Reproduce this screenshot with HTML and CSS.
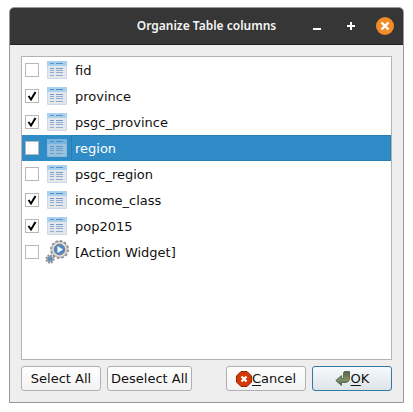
FILE: index.html
```html
<!DOCTYPE html>
<html lang="en">
<head>
<meta charset="utf-8">
<title>Organize Table columns</title>
<link rel="stylesheet" href="styles.css">
</head>
<body>
<svg class="defs" aria-hidden="true">
  <symbol id="table" viewBox="0 0 20 20">
    <rect x="0" y="1" width="20" height="18" rx="1" fill="#cfd8e6"/>
    <rect x="1" y="6" width="18" height="12" fill="#e3e7ec"/>
    <rect x="0" y="1" width="20" height="5" fill="#a9d0ec"/>
    <path d="M3 3.500h4M9 3.500h7" stroke="#5490c8"/>
    <path d="M3 8.500h4M9 8.500h7" stroke="#6f9fd0"/>
    <path d="M3 10.500h4M9 10.500h7M3 12.500h4M9 12.500h7M3 15.500h4M9 15.500h7" stroke="#8eadd2"/>
  </symbol>
</svg>
<main class="window">
  <header class="titlebar">
    <h1>Organize Table columns</h1>
    <div class="controls">
      <button type="button" aria-label="Minimize"><svg width="18" height="18" viewBox="0 0 18 18"><path d="M5 12h8" stroke="#fff" stroke-width="2"/></svg></button>
      <button type="button" aria-label="Maximize"><svg width="18" height="18" viewBox="0 0 18 18"><path d="M5 9h8M9 5v8" stroke="#fff" stroke-width="2"/></svg></button>
      <button type="button" aria-label="Close"><svg width="18" height="18" viewBox="0 0 18 18"><circle cx="9" cy="9" r="9" fill="#f28c28"/><path d="M5.500 5.500l7 7M12.500 5.500l-7 7" stroke="#fff" stroke-width="2.400"/></svg></button>
    </div>
  </header>
  <div class="content">
    <ul class="columns">
      <li><label><input type="checkbox"><svg class="icon"><use href="#table"/></svg><span>fid</span></label></li>
      <li><label><input type="checkbox" checked><svg class="icon"><use href="#table"/></svg><span>province</span></label></li>
      <li><label><input type="checkbox" checked><svg class="icon"><use href="#table"/></svg><span>psgc_province</span></label></li>
      <li class="selected"><label><input type="checkbox"><svg class="icon"><use href="#table"/></svg><span>region</span></label></li>
      <li><label><input type="checkbox"><svg class="icon"><use href="#table"/></svg><span>psgc_region</span></label></li>
      <li><label><input type="checkbox" checked><svg class="icon"><use href="#table"/></svg><span>income_class</span></label></li>
      <li><label><input type="checkbox" checked><svg class="icon"><use href="#table"/></svg><span>pop2015</span></label></li>
      <li><label><input type="checkbox"><svg class="icon gears" viewBox="0 0 24 24">
        <circle cx="14.500" cy="9.500" r="8.500" fill="#e2e2e2" stroke="#8a8a8a" stroke-width="1.800" stroke-dasharray="2.600 1.850"/>
        <circle cx="14.500" cy="9.500" r="7.800" fill="#e0e0e0" stroke="#a0a0a0" stroke-width=".8"/>
        <circle cx="14.500" cy="9.500" r="5.300" fill="#4f8bc6" stroke="#777"/>
        <path d="M12.500 6v7l5.500-3.500z" fill="#fff"/>
        <circle cx="5" cy="19" r="3.800" fill="#d5d5d5" stroke="#8a8a8a" stroke-width="1.600" stroke-dasharray="1.800 1.180"/>
        <circle cx="5" cy="19" r="2.700" fill="#5b92c8" stroke="#999" stroke-width=".8"/>
      </svg><span>[Action Widget]</span></label></li>
    </ul>
    <footer class="actions">
      <button type="button">Select All</button>
      <button type="button" class="wide">Deselect All</button>
      <button type="button" class="cancel"><svg width="16" height="16" viewBox="0 0 16 16"><path d="M5 .5h6L15.500 5v6L11 15.500H5L.5 11V5z" fill="#d33a05" stroke="#8c2400"/><path d="M5.500 5.500l5 5M10.500 5.500l-5 5" stroke="#fff" stroke-width="2.200"/></svg><span><u>C</u>ancel</span></button>
      <button type="button" class="ok"><svg width="16" height="16" viewBox="0 0 16 16"><defs><linearGradient id="leaf" x1="0" y1="0" x2="0" y2="1"><stop offset="0" stop-color="#56634a"/><stop offset=".6" stop-color="#81936b"/><stop offset="1" stop-color="#4c5a3e"/></linearGradient></defs><path d="M8.500 1.500Q9 .5 10 .5h4.500v7.500Q14 11 11 11.500H6.500v3L.8 9.500 6.500 4.500v3h2z" fill="url(#leaf)" stroke="#4b5840" stroke-width=".8"/></svg><span><u>O</u>K</span></button>
    </footer>
  </div>
</main>
</body>
</html>
```
FILE: styles.css
```css
* {
  box-sizing: border-box;
}

body {
  margin: 0;
  padding: 7px 9px 9px;
  min-height: 100vh;
  display: flex;
  background: #fff;
  color: #111;
  font: 13px/16px "DejaVu Sans", sans-serif;
}

button {
  font: inherit;
  color: inherit;
}

.defs {
  position: absolute;
  width: 0;
  height: 0;
}

.window {
  flex: 1;
  display: flex;
  flex-direction: column;
  border: 1px solid #999;
  border-radius: 5px 5px 0 0;
  background: #eee;
  overflow: hidden;
}

.titlebar {
  display: grid;
  grid-template-columns: 1fr auto 1fr;
  align-items: center;
  height: 37px;
  padding: 0 9px;
  border-bottom: 1px solid #222;
  background: #363636;
  color: #f5f5f5;
}

.titlebar h1 {
  grid-column: 2;
  margin: 0;
  font: 600 12px/16px "Noto Sans", sans-serif;
}

.controls {
  display: flex;
  justify-content: flex-end;
  gap: 16px;
}

.controls button {
  display: flex;
  padding: 0;
  border: 0;
  background: none;
}

.content {
  flex: 1;
  display: flex;
  flex-direction: column;
  gap: 6px;
  padding: 11px;
}

.columns {
  flex: 1;
  margin: 0;
  padding: 0;
  list-style: none;
  border: 1px solid #b4b4b4;
  background: #fff;
}

.columns label {
  display: flex;
  align-items: center;
  height: 26px;
  padding-left: 3px;
}

.columns input {
  appearance: none;
  width: 14px;
  height: 14px;
  margin: 0 8px 0 0;
  border: 1px solid #b8b8b8;
  background: #fff;
}

.columns input:checked {
  background: #fff url('data:image/svg+xml,<svg xmlns="http://www.w3.org/2000/svg" viewBox="0 0 12 12"><path d="M2.500 6L5 9.500 9.500 2" fill="none" stroke="black" stroke-width="2"/></svg>');
}

.icon {
  width: 20px;
  height: 20px;
  margin-right: 4px;
}

.gears {
  width: 24px;
  height: 24px;
  margin: 0 2px 0 -2px;
}

.columns span {
  flex: 1;
  padding: 6px 4px 4px;
}

.selected {
  background: #308cc6;
  color: #fff;
}

.selected .icon {
  opacity: .6;
}

.selected span {
  border: 1px solid #2a7db1;
  padding: 5px 3px 3px;
}

.actions {
  display: flex;
  gap: 6px;
}

.actions button {
  display: flex;
  align-items: center;
  justify-content: center;
  width: 80px;
  height: 25px;
  padding: 0;
  border: 1px solid #b0b0b0;
  border-radius: 3px;
  background: linear-gradient(#fefefe, #f3f3f3);
  white-space: nowrap;
}

.actions .wide {
  width: 85px;
}

.actions .cancel {
  margin-left: auto;
}

.actions .ok {
  border-color: #3278a4;
  background: linear-gradient(#f7fafc, #dde4ea);
}

.actions u {
  text-underline-offset: 2px;
}
```
